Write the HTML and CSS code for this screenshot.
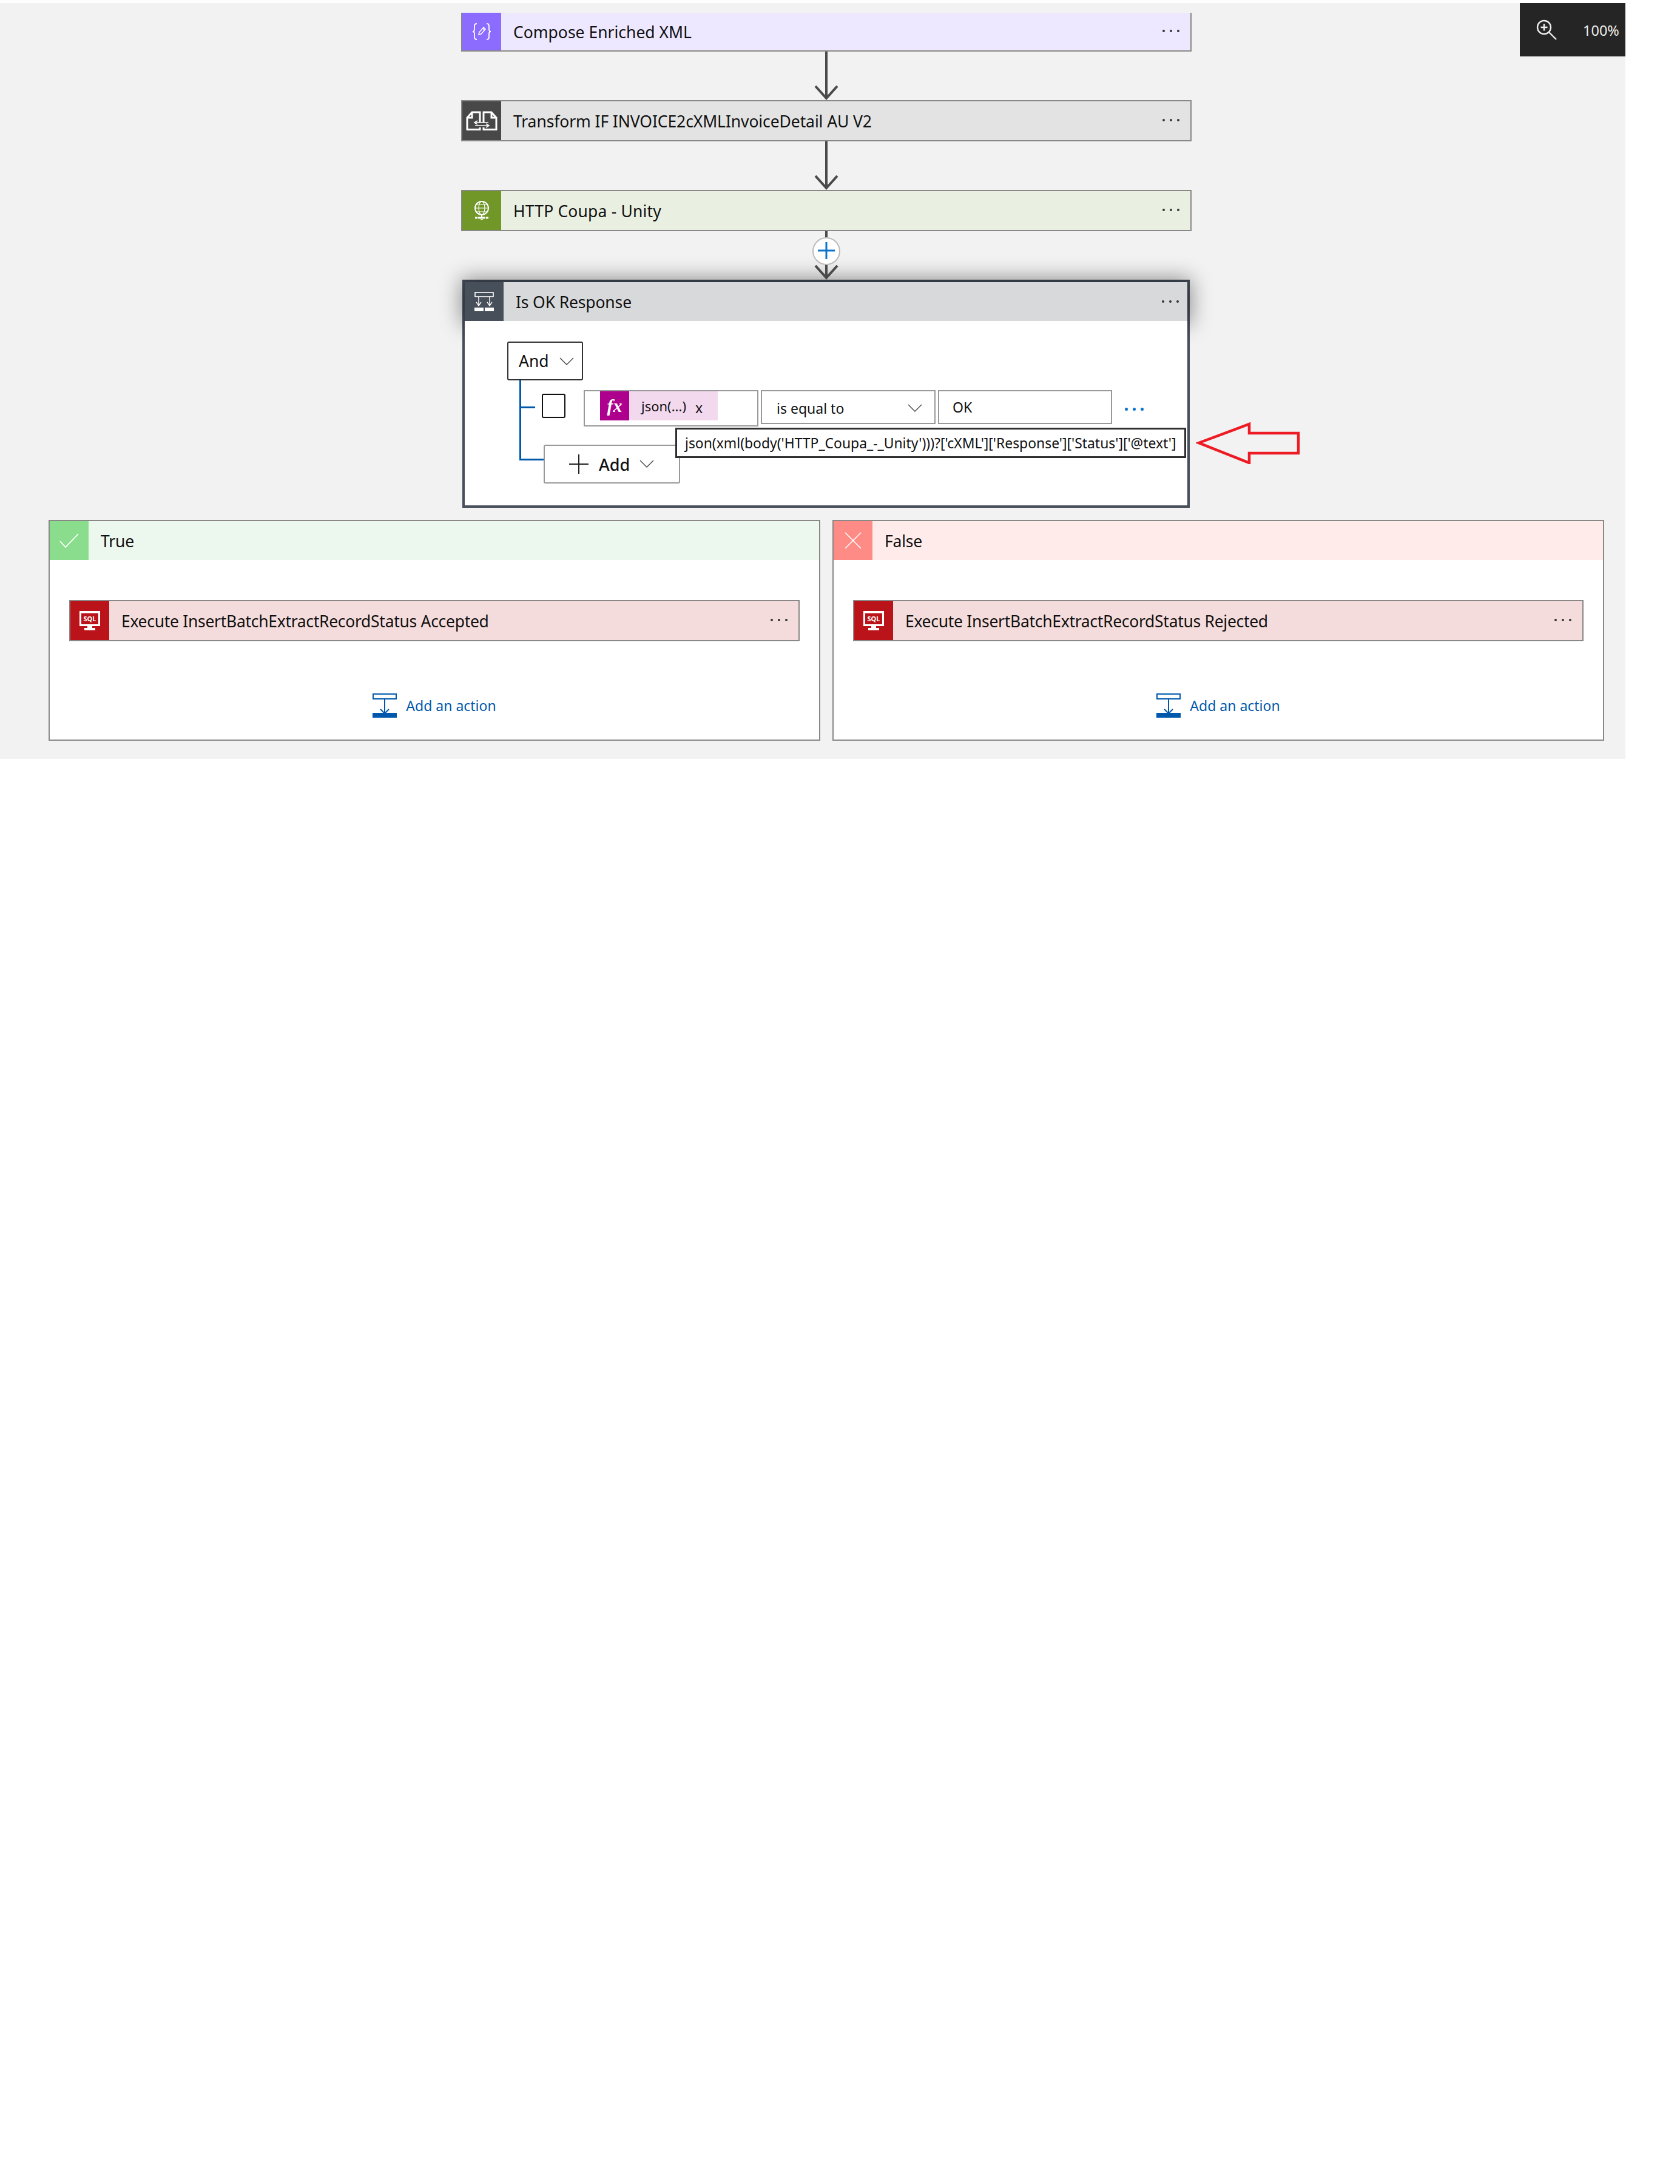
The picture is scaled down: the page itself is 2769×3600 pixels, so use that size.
FILE: index.html
```html
<!DOCTYPE html>
<html lang="en">
<head>
<meta charset="utf-8">
<title>Logic App Designer</title>
<link rel="stylesheet" href="styles.css">
</head>
<body>
<main class="canvas">
  <div class="zoom-panel">
    <svg class="zoom-icon" viewBox="0 0 36 36" width="36" height="36"><circle cx="14" cy="13" r="11" fill="none" stroke="#eee" stroke-width="2.4"/><path d="M22 21 L34 33" stroke="#eee" stroke-width="2.4" fill="none"/><path d="M8.5 13 H19.5 M14 7.5 V18.5" stroke="#eee" stroke-width="2.6" fill="none"/></svg>
    <span class="zoom-text">100%</span>
  </div>

  <div class="flow">
    <section class="node node-compose node-first">
      <div class="node-icon"><svg viewBox="0 0 32 28" width="32" height="28" fill="none" stroke="#fff"><path d="M8 1 C4 1 4 3 4 7 V10 C4 13 3 14 1 14 C3 14 4 15 4 18 V21 C4 25 4 27 8 27 M24 1 C28 1 28 3 28 7 V10 C28 13 29 14 31 14 C29 14 28 15 28 18 V21 C28 25 28 27 24 27" stroke-width="1.8"/><path d="M11 19 L12 15 L19 7 L22 10 L15 18 Z M17.5 8.5 L20.5 11.5" stroke-width="1.5"/></svg></div>
      <div class="node-title">Compose Enriched XML</div>
      <div class="dots"><i></i><i></i><i></i></div>
    </section>
    <div class="connector"><svg class="arrow" viewBox="0 0 40 24" width="40" height="24" fill="none" stroke="#4a4a4a" stroke-width="4"><path d="M2 1 L20 21 L38 1"/></svg></div>
    <section class="node node-transform">
      <div class="node-icon"><svg viewBox="0 0 52 32" width="52" height="32" fill="none" stroke="#fff" stroke-width="3"><path d="M23 19 V2 H10 L2 11 V30.500 H23 V27 M10 2 V11 H2"/><path d="M29 19 V2 H42 L50 11 V30.500 H29 V27 M42 2 V11 H50"/><path d="M15 19 H37 M15 24 H37" stroke-width="1.6"/><path d="M19 16 L14 19 L19 22 M33 21 L38 24 L33 27" stroke-width="1.6"/></svg></div>
      <div class="node-title title-transform">Transform IF INVOICE2cXMLInvoiceDetail AU V2</div>
      <div class="dots"><i></i><i></i><i></i></div>
    </section>
    <div class="connector"><svg class="arrow" viewBox="0 0 40 24" width="40" height="24" fill="none" stroke="#4a4a4a" stroke-width="4"><path d="M2 1 L20 21 L38 1"/></svg></div>
    <section class="node node-http">
      <div class="node-icon"><svg viewBox="0 0 26 32" width="26" height="32" fill="none" stroke="#fff"><circle cx="13" cy="12" r="11" stroke-width="2"/><ellipse cx="13" cy="12" rx="5" ry="11" stroke-width="1.2"/><path d="M2 12 H24 M4 6 H22 M4 18 H22" stroke-width="1.2"/><path d="M13 23 V27" stroke-width="2"/><path d="M2 28 H24" stroke-width="3" stroke-dasharray="4 1 12 1 5"/><path d="M11 31 H15" stroke-width="1.5"/></svg></div>
      <div class="node-title title-http">HTTP Coupa - Unity</div>
      <div class="dots"><i></i><i></i><i></i></div>
    </section>
    <div class="connector connector-add">
      <div class="add-circle"><svg viewBox="0 0 30 30" width="30" height="30" stroke="#0a74cc" stroke-width="3" fill="none"><path d="M1 14 H29 M15 0 V28" /></svg></div>
      <svg class="arrow" viewBox="0 0 40 24" width="40" height="24" fill="none" stroke="#4a4a4a" stroke-width="4"><path d="M2 1 L20 21 L38 1"/></svg>
    </div>

    <section class="condition">
      <header class="cond-head">
        <div class="cond-icon"><svg viewBox="0 0 32 32" width="32" height="32" fill="none" stroke="#fff"><rect x="1" y="1" width="30" height="7" stroke-width="1.6"/><path d="M7 8 V23 M25 8 V23" stroke-width="1.4"/><path d="M3 17 L7 23 L11 17 M21 17 L25 23 L29 17" stroke-width="1.4"/><path d="M0 26 H15 V32 H0 Z M17 26 H32 V32 H17 Z" fill="#fff" stroke="none"/></svg></div>
        <div class="cond-title">Is OK Response</div>
        <div class="dots dots-cond"><i></i><i></i><i></i></div>
      </header>
      <div class="cond-body">
        <div class="and-box"><span>And</span><svg class="chev" viewBox="0 0 24 13" width="24" height="13"><path d="M1 1 L12 12 L23 1" fill="none" stroke="#444" stroke-width="1.4"/></svg></div>
        <div class="tree">
          <div class="rule-row">
            <div class="check"></div>
            <div class="field field-token">
              <div class="token">
                <div class="fx">fx</div>
                <span class="token-label">json(...)</span>
                <span class="token-x">x</span>
              </div>
            </div>
            <div class="field field-op"><span>is equal to</span><svg class="chev" viewBox="0 0 24 13" width="24" height="13"><path d="M1 1 L12 12 L23 1" fill="none" stroke="#444" stroke-width="1.4"/></svg></div>
            <div class="field field-val"><span>OK</span></div>
            <div class="row-dots"><i></i><i></i><i></i></div>
          </div>
          <div class="add-btn">
            <svg class="add-plus" viewBox="0 0 32 32" width="32" height="32" stroke="#222" stroke-width="2" fill="none"><path d="M0 16 H32 M16 0 V32"/></svg>
            <span>Add</span>
            <svg class="chev" viewBox="0 0 24 13" width="24" height="13"><path d="M1 1 L12 12 L23 1" fill="none" stroke="#444" stroke-width="1.4"/></svg>
          </div>
          <div class="tooltip">json(xml(body('HTTP_Coupa_-_Unity')))?['cXML']['Response']['Status']['@text']</div>
        </div>
      </div>
      <svg class="red-arrow" viewBox="0 0 172 70" width="172" height="70"><path d="M5 35 L88 4 V19 H169 V52 H88 V68 Z" fill="none" stroke="#ed1c24" stroke-width="4.5"/></svg>
    </section>
  </div>

  <div class="branches">
    <section class="branch">
      <header class="branch-head head-true">
        <div class="branch-icon icon-true"><svg viewBox="0 0 32 24" width="32" height="24" fill="none" stroke="#fff" stroke-width="1.8"><path d="M1 13 L10 23 L31 1"/></svg></div>
        <div class="branch-title">True</div>
      </header>
      <div class="branch-body">
        <div class="node node-sql">
          <div class="node-icon"><svg viewBox="0 0 36 34" width="36" height="34"><path fill-rule="evenodd" d="M1 1 H35 V26 H22 V29 H27 V33 H9 V29 H14 V26 H1 Z M4 5 V23 H32 V5 Z" fill="#fff"/><text class="sql-text" x="18" y="18" text-anchor="middle">SQL</text></svg></div>
          <div class="node-title title-sql">Execute InsertBatchExtractRecordStatus Accepted</div>
          <div class="dots"><i></i><i></i><i></i></div>
        </div>
        <div class="add-action">
          <svg viewBox="0 0 40 40" width="40" height="40" fill="none" stroke="#0058ad"><rect x="1" y="1" width="38" height="8" stroke-width="2"/><path d="M20 10 V32 M13 26 L20 33 L27 26" stroke-width="2"/><rect x="0" y="32" width="40" height="8" fill="#0058ad" stroke="none"/></svg>
          <span>Add an action</span>
        </div>
      </div>
    </section>
    <section class="branch">
      <header class="branch-head head-false">
        <div class="branch-icon icon-false"><svg viewBox="0 0 28 28" width="28" height="28" fill="none" stroke="#fff" stroke-width="1.6"><path d="M1 1 L27 27 M27 1 L1 27"/></svg></div>
        <div class="branch-title">False</div>
      </header>
      <div class="branch-body">
        <div class="node node-sql">
          <div class="node-icon"><svg viewBox="0 0 36 34" width="36" height="34"><path fill-rule="evenodd" d="M1 1 H35 V26 H22 V29 H27 V33 H9 V29 H14 V26 H1 Z M4 5 V23 H32 V5 Z" fill="#fff"/><text class="sql-text" x="18" y="18" text-anchor="middle">SQL</text></svg></div>
          <div class="node-title title-sql">Execute InsertBatchExtractRecordStatus Rejected</div>
          <div class="dots"><i></i><i></i><i></i></div>
        </div>
        <div class="add-action">
          <svg viewBox="0 0 40 40" width="40" height="40" fill="none" stroke="#0058ad"><rect x="1" y="1" width="38" height="8" stroke-width="2"/><path d="M20 10 V32 M13 26 L20 33 L27 26" stroke-width="2"/><rect x="0" y="32" width="40" height="8" fill="#0058ad" stroke="none"/></svg>
          <span>Add an action</span>
        </div>
      </div>
    </section>
  </div>
</main>
</body>
</html>
```
FILE: styles.css
```css
* { box-sizing: border-box; }
html, body { margin: 0; padding: 0; background: #fff; }
body { font-family: "Noto Sans", "Open Sans", sans-serif; color: #111; padding-top: 5px; }

.canvas { position: relative; width: 2679px; height: 1246px; background: #f2f2f2; padding-top: 16px; }

.zoom-panel { position: absolute; top: 0; right: 0; width: 174px; height: 88px; background: #252525; color: #eee; display: flex; align-items: flex-start; }
.zoom-icon { margin: 27px 0 0 26px; }
.zoom-text { font-size: 23.5px; line-height: 32px; margin: 29px 0 0 42px; }

.flow { width: 1204px; margin-left: 760px; display: flex; flex-direction: column; }

.node { display: flex; align-items: center; height: 68px; border: 2px solid #8a8886; position: relative; }
.node-first { height: 64px; border-top: 0; }
.node-icon { width: 64px; align-self: stretch; display: flex; align-items: center; justify-content: center; flex: none; }
.node-title { font-size: 26.5px; margin-left: 20px; padding-top: 2px; white-space: nowrap; flex: 1; }
.title-http { letter-spacing: .17px; }
.title-transform { letter-spacing: -.1px; }
.title-sql { letter-spacing: -.3px; }
.dots { display: flex; gap: 8px; margin: -3px 18px 0 0; }
.dots i { width: 4px; height: 4px; border-radius: 50%; background: #333; }

.node-compose { background: #ede7ff; }
.node-compose .node-icon { background: #8c6cff; }
.node-transform { background: #e3e3e3; }
.node-transform .node-icon { background: #484848; }
.node-http { background: #e9f0e1; }
.node-http .node-icon { background: #709727; }
.node-sql { background: #f5dcdc; }
.node-sql .node-icon { background: #ba141a; }
.sql-text { font-family: "Noto Sans", sans-serif; font-size: 11px; font-weight: 700; fill: #fff; }

.connector { height: 80px; display: flex; flex-direction: column; justify-content: flex-end; align-items: center; position: relative; }
.connector::before { content: ""; position: absolute; left: 50%; top: 0; bottom: 2px; width: 4px; margin-left: -2px; background: #4a4a4a; }
.arrow { position: relative; }
.connector-add { z-index: 2; }
.add-circle { position: absolute; left: 50%; top: 10px; width: 46px; height: 46px; margin-left: -23px; border-radius: 50%; background: #fff; border: 2px solid #bbb; display: flex; align-items: center; justify-content: center; z-index: 1; }

.condition { position: relative; width: 1199px; height: 376px; margin-left: 2px; border: 4px solid #474f5b; background: #fff; }
.cond-head { display: flex; align-items: center; height: 64px; background: #d8d9db; box-shadow: 0 0 34px 6px rgba(0,0,0,.42); }
.cond-icon { width: 64px; align-self: stretch; background: #474f5b; display: flex; align-items: center; justify-content: center; }
.cond-title { font-size: 26.5px; letter-spacing: -.15px; margin-left: 20px; padding-top: 2px; flex: 1; }
.dots-cond { margin: -1px 14px 0 0; }

.cond-body { position: relative; height: 304px; background: #fff; padding: 34px 0 0 70px; }
.and-box { width: 125px; height: 64px; border: 2px solid #333; border-radius: 3px; display: flex; align-items: center; font-size: 26.5px; padding-left: 17px; gap: 17px; }
.chev { flex: none; }

.tree { position: relative; margin-left: 20px; padding-top: 16px; }
.tree::before { content: ""; position: absolute; left: 0; top: 0; width: 40px; height: 129px; border-left: 3px solid #0058ad; border-bottom: 3px solid #0058ad; }
.rule-row { position: relative; display: flex; align-items: flex-start; padding-left: 37px; height: 60px; }
.rule-row::before { content: ""; position: absolute; left: 0; top: 27px; width: 26px; height: 3px; background: #0058ad; }
.check { width: 39px; height: 40px; border: 2px solid #111; border-radius: 3px; margin: 6px 30px 0 0; flex: none; }
.field { border: 2px solid #999; height: 56px; display: flex; align-items: center; flex: none; font-size: 23px; }
.field-token { width: 288px; height: 60px; align-items: flex-start; padding-left: 25px; margin-right: 4px; }
.field-op { width: 288px; padding: 3px 20px 0 24px; justify-content: space-between; margin-right: 4px; }
.field-val { width: 287px; padding-left: 22px; }
.token { display: flex; align-items: center; width: 194px; height: 48px; background: #f3d9ee; }
.fx { width: 48px; height: 48px; background: #ad008c; color: #fff; font-family: "Liberation Serif", serif; font-style: italic; font-weight: 700; font-size: 30px; display: flex; align-items: center; justify-content: center; }
.token-label { font-size: 22px; margin-left: 20px; }
.token-x { font-size: 23px; margin: 6px 0 0 15px; }
.row-dots { display: flex; gap: 8px; margin: 29px 0 0 21px; }
.row-dots i { width: 5px; height: 5px; border-radius: 50%; background: #0a74cc; }

.add-btn { position: relative; margin: 30px 0 0 40px; width: 225px; height: 64px; border: 2px solid #999; border-radius: 3px; display: flex; align-items: center; padding-left: 40px; font-size: 27px; font-weight: 500; background: #fff; }
.add-btn .add-plus { margin-right: 17px; }
.add-btn .chev { margin-left: 16px; margin-top: -2px; }
.tooltip { position: absolute; left: 257px; top: 78px; width: 842px; height: 50px; border: 3px solid #2f2f2f; background: #fff; font-size: 22.9px; padding-left: 13px; display: flex; align-items: center; white-space: nowrap; z-index: 3; }
.red-arrow { position: absolute; left: 1205px; top: 230px; }

.branches { display: flex; gap: 20px; padding-left: 80px; margin-top: 20px; }
.branch { width: 1272px; height: 364px; border: 2px solid #8a8886; background: #fff; }
.branch-head { display: flex; align-items: center; height: 64px; }
.head-true { background: #ecf7ee; }
.head-false { background: #ffecea; }
.branch-icon { width: 64px; align-self: stretch; display: flex; align-items: center; justify-content: center; }
.icon-true { background: #89dd8c; }
.icon-false { background: #fe8b85; }
.branch-title { font-size: 26.5px; letter-spacing: -.2px; margin-left: 20px; padding-top: 2px; }
.branch-body { padding: 66px 32px 0; }
.add-action { display: flex; align-items: center; justify-content: center; gap: 15px; margin-top: 86px; color: #0058ad; font-size: 23px; }
```
